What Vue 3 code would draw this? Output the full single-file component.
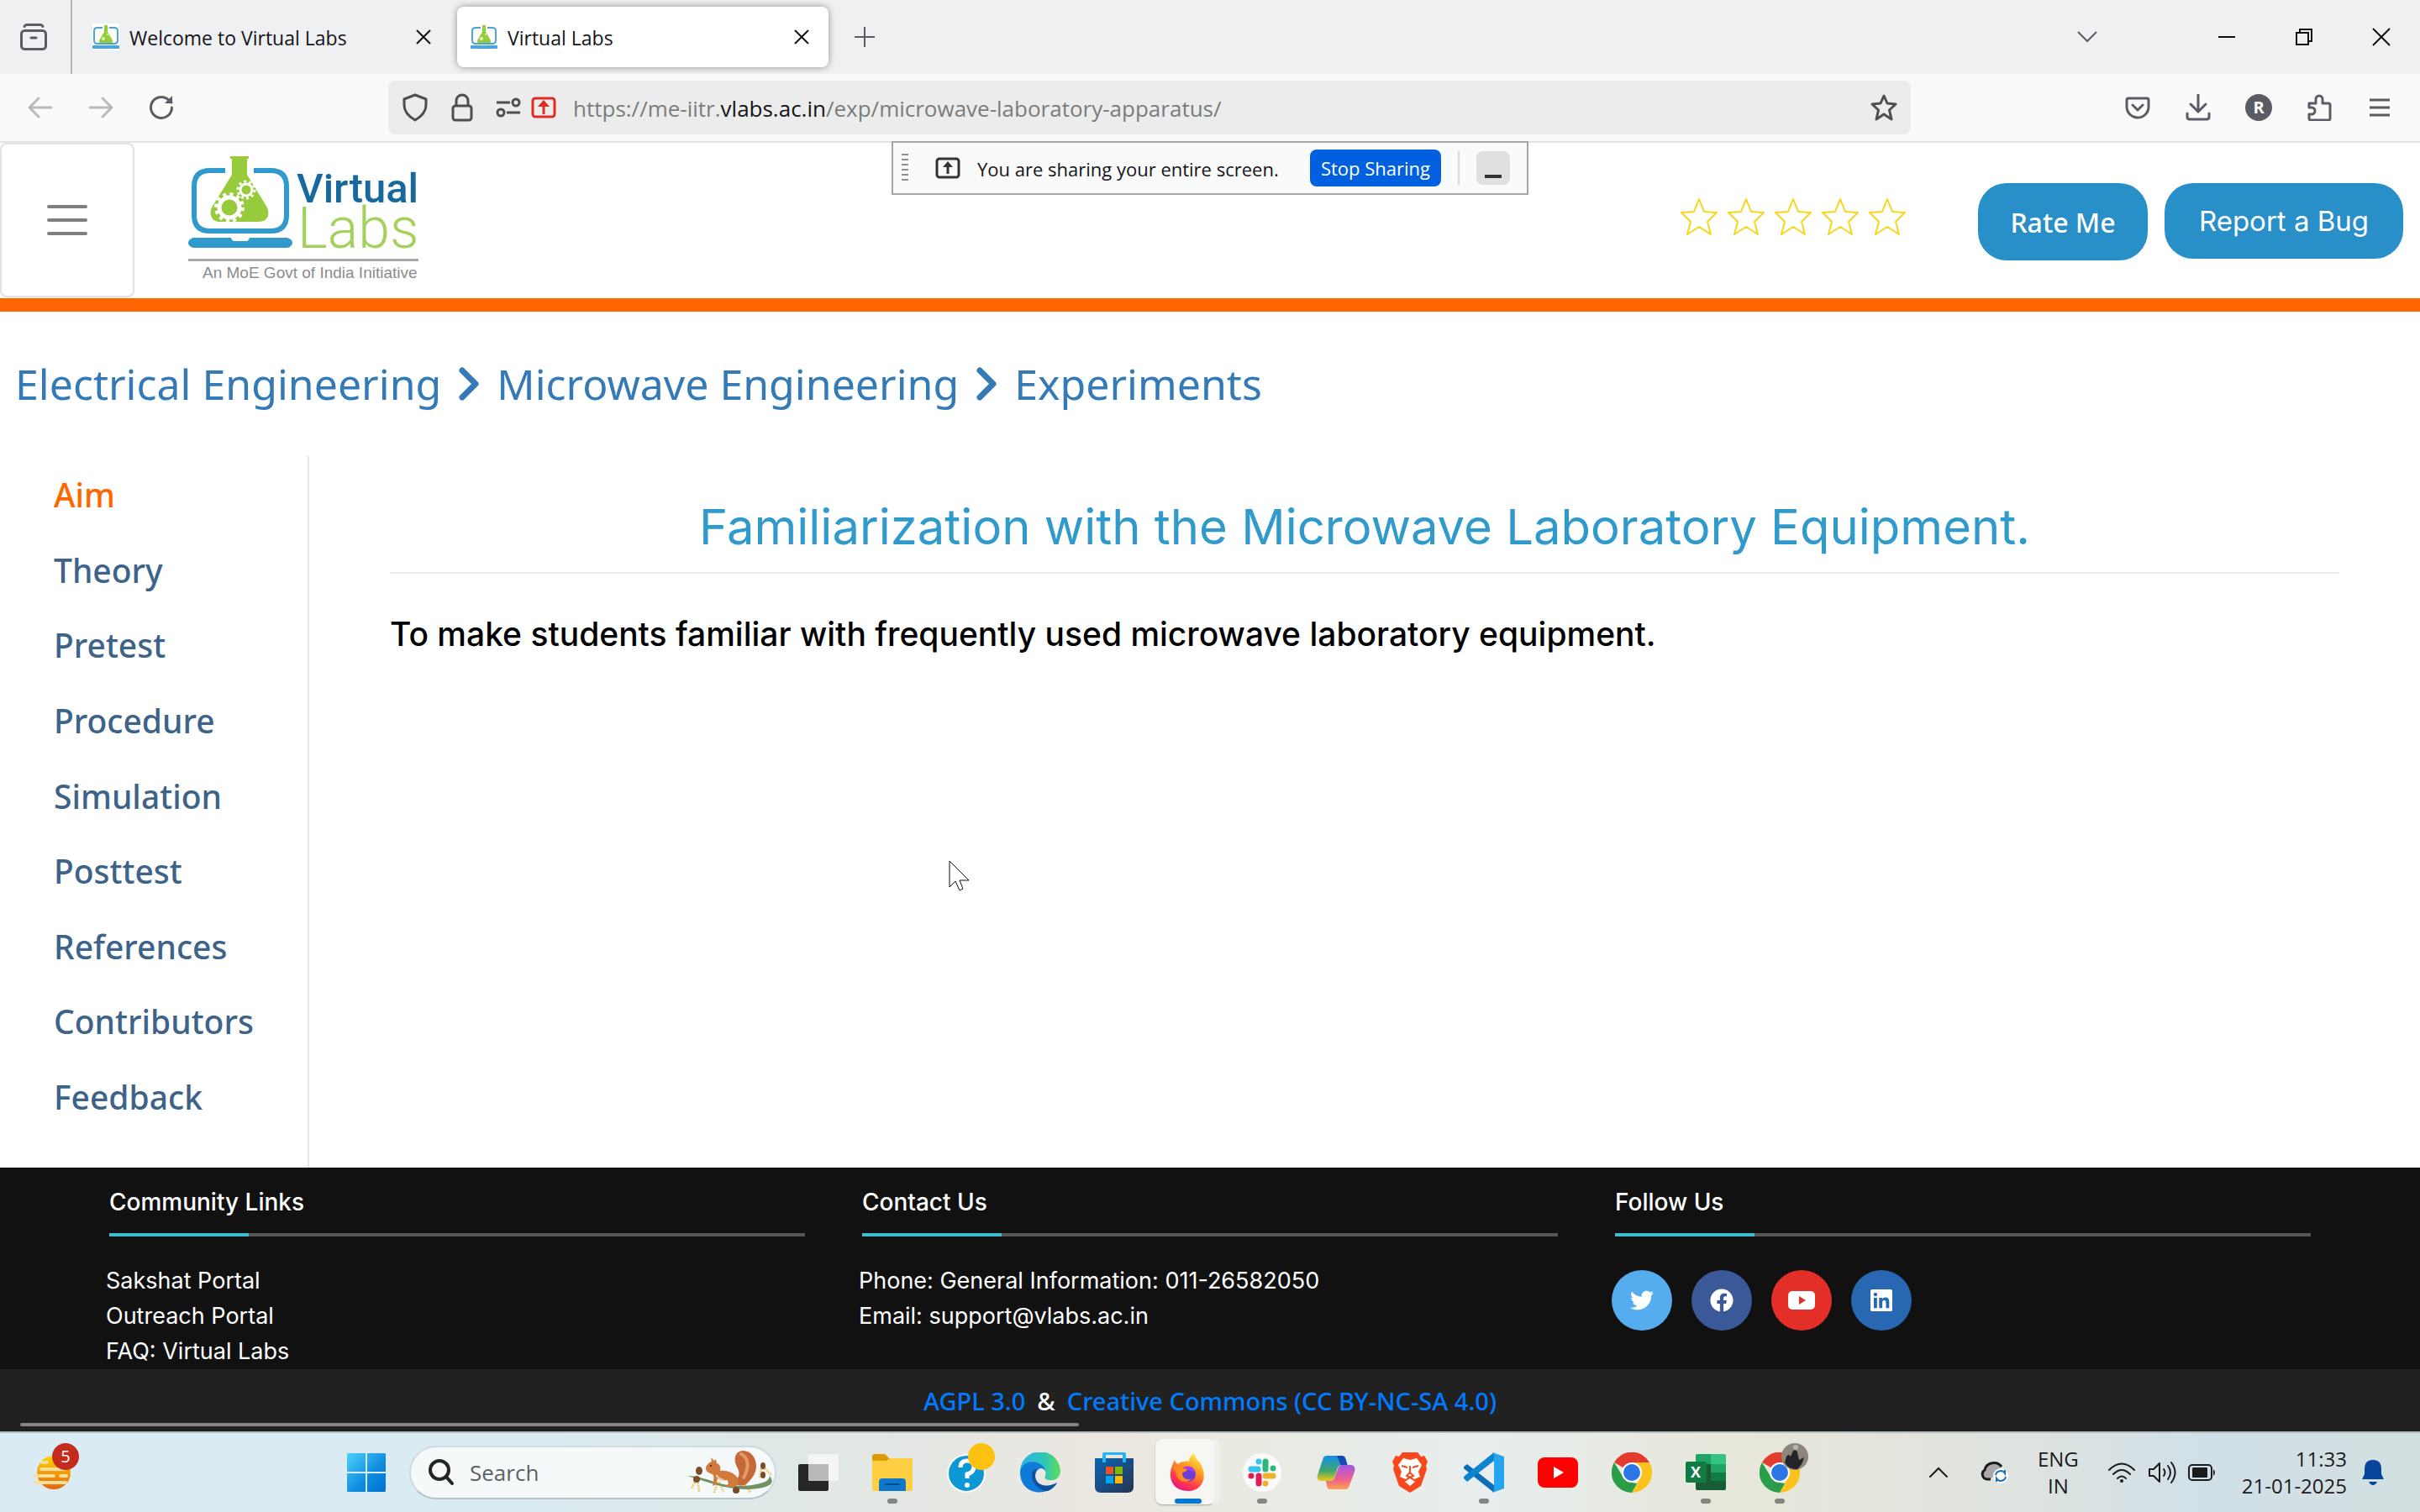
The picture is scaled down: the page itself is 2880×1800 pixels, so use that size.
<script setup>
import { ref } from 'vue'

const tabs = [
  { title: 'Welcome to Virtual Labs', active: false },
  { title: 'Virtual Labs', active: true },
]

const crumbs = ['Electrical Engineering', 'Microwave Engineering', 'Experiments']

const sections = ['Aim', 'Theory', 'Pretest', 'Procedure', 'Simulation', 'Posttest', 'References', 'Contributors', 'Feedback']
const current = ref('Aim')

const community = ['Sakshat Portal', 'Outreach Portal', 'FAQ: Virtual Labs']
const search = ref('')
</script>

<template>
  <div class="screen">
    <!-- tab strip -->
    <div class="tabstrip">
      <button class="view-btn" aria-label="Recent browsing">
        <svg width="32" height="32" viewBox="0 0 32 32" fill="none" stroke="#5b5b66" stroke-width="3" stroke-linecap="round">
          <path d="M5 3.500q1-2 3-2h16q2 0 3 2" /><rect x="1.500" y="8.500" width="29" height="22" rx="4" /><path d="M13 17h6" />
        </svg>
      </button>
      <div v-for="t in tabs" :key="t.title" class="tab" :class="{ active: t.active }">
        <svg class="favicon" width="32" height="32" viewBox="0 0 32 32">
          <rect width="32" height="32" fill="#fff" />
          <path d="M12 5H6Q2 5 2 9v11q0 4 4 4h20q4 0 4-4V9q0-4-4-4h-6" fill="none" stroke="#4ba6d3" stroke-width="2" />
          <path d="M14 2h4v8l6 10q1 3-2 3H10q-3 0-2-3l6-10z" fill="#97cb3b" />
          <circle cx="13" cy="18" r="2" fill="#e6f3cd" /><circle cx="18" cy="13" r="1" fill="#e6f3cd" />
          <rect x="0" y="26" width="32" height="4" rx="1" fill="#4ba6d3" />
        </svg>
        <span class="tab-title">{{ t.title }}</span>
        <button class="tab-close" aria-label="Close tab">
          <svg width="18" height="18" viewBox="0 0 18 18" stroke="#15141a" stroke-width="2"><path d="M1 1l16 16M17 1L1 17" /></svg>
        </button>
      </div>
      <button class="new-tab" aria-label="New tab">
        <svg width="26" height="26" viewBox="0 0 26 26" stroke="#5b5b66" stroke-width="2"><path d="M13 1v24M1 13h24" /></svg>
      </button>
      <div class="window-buttons">
        <button class="list-tabs" aria-label="List all tabs">
          <svg width="26" height="16" viewBox="0 0 26 16" fill="none" stroke="#5b5b66" stroke-width="2"><path d="M2 2l11 11L24 2" /></svg>
        </button>
        <button aria-label="Minimize">
          <svg width="22" height="22" viewBox="0 0 22 22" stroke="#111" stroke-width="2"><path d="M1 11h20" /></svg>
        </button>
        <button aria-label="Restore">
          <svg width="22" height="22" viewBox="0 0 22 22" fill="none" stroke="#111" stroke-width="2"><rect x="2" y="6" width="14" height="14" /><path d="M6 6V2h14v14h-4" /></svg>
        </button>
        <button aria-label="Close">
          <svg width="22" height="22" viewBox="0 0 22 22" stroke="#111" stroke-width="2"><path d="M1 1l20 20M21 1L1 21" /></svg>
        </button>
      </div>
    </div>

    <!-- navigation toolbar -->
    <div class="toolbar">
      <div class="nav-buttons">
        <button aria-label="Back">
          <svg width="30" height="26" viewBox="0 0 30 26" fill="none" stroke="#b9babf" stroke-width="3" stroke-linecap="round" stroke-linejoin="round"><path d="M13 2L2 13l11 11M2 13h26" /></svg>
        </button>
        <button aria-label="Forward">
          <svg width="30" height="26" viewBox="0 0 30 26" fill="none" stroke="#b9babf" stroke-width="3" stroke-linecap="round" stroke-linejoin="round"><path d="M17 2l11 11-11 11M28 13H2" /></svg>
        </button>
        <button aria-label="Reload">
          <svg width="30" height="30" viewBox="0 0 30 30" fill="none" stroke="#5b5b66" stroke-width="3" stroke-linecap="round"><path d="M27.500 15A12.500 12.500 0 1 1 22 4.600L27 9" /><path d="M28 1v9h-9z" fill="#5b5b66" stroke="none" /></svg>
        </button>
      </div>
      <div class="urlbar">
        <svg width="32" height="34" viewBox="0 0 32 34" fill="none" stroke="#4d4d52" stroke-width="3" stroke-linejoin="round"><path d="M16 2l13 5v7c0 8-6 14-13 18C9 28 3 22 3 14V7z" /></svg>
        <svg width="26" height="34" viewBox="0 0 26 34" fill="none" stroke="#4d4d52" stroke-width="3"><rect x="2" y="15" width="22" height="17" rx="3" /><path d="M6 15V9a7 7 0 0 1 14 0v6" /></svg>
        <svg class="perms" width="30" height="24" viewBox="0 0 30 24" fill="none" stroke="#4d4d52" stroke-width="3"><path d="M1 6h16M13 18h16" /><circle cx="24" cy="6" r="4" /><circle cx="6" cy="18" r="4" /></svg>
        <svg class="share-ic" width="30" height="26" viewBox="0 0 30 26" fill="none" stroke="#e22b22" stroke-width="3"><rect x="2" y="2" width="26" height="22" rx="3" /><path d="M15 21V9" /><path d="M8 12l7-8 7 8z" fill="#e22b22" stroke="none" /></svg>
        <div class="url" role="textbox" aria-label="Address" tabindex="0">https://me-iitr.<b>vlabs.ac.in</b>/exp/microwave-laboratory-apparatus/</div>
        <button aria-label="Bookmark this page">
          <svg width="32" height="32" viewBox="0 0 32 32" fill="none" stroke="#4d4d52" stroke-width="3" stroke-linejoin="round"><path d="M16 2l4 9 10 1-7.500 7 2.500 11-9-6-9 6 2.500-11L2 12l10-1z" /></svg>
        </button>
      </div>
      <div class="ext-buttons">
        <button aria-label="Save to Pocket">
          <svg width="32" height="32" viewBox="0 0 32 32" fill="none" stroke="#5b5b66" stroke-width="3" stroke-linecap="round" stroke-linejoin="round"><path d="M5 5h22q2 0 2 2v8a13 13 0 0 1-26 0V7q0-2 2-2z" /><path d="M10 13l6 6 6-6" /></svg>
        </button>
        <button aria-label="Downloads">
          <svg width="32" height="32" viewBox="0 0 32 32" fill="none" stroke="#5b5b66" stroke-width="3" stroke-linecap="round" stroke-linejoin="round"><path d="M16 1v19M7 12l9 9 9-9M3 23v4q0 3 3 3h20q3 0 3-3v-4" /></svg>
        </button>
        <button class="account" aria-label="Account">R</button>
        <button aria-label="Extensions">
          <svg width="32" height="32" viewBox="0 0 32 32" fill="none" stroke="#5b5b66" stroke-width="3" stroke-linejoin="round"><path d="M4 11h8V6a4 4 0 0 1 8 0v5h7q2 0 2 2v16q0 2-2 2H6q-2 0-2-2v-5h3a4 4 0 0 0 0-8H4z" /></svg>
        </button>
        <button aria-label="Menu">
          <svg width="32" height="22" viewBox="0 0 32 22" stroke="#5b5b66" stroke-width="3"><path d="M4 2h24M4 11h24M4 20h24" /></svg>
        </button>
      </div>
    </div>

    <!-- screen sharing notice -->
    <div class="sharing">
      <svg width="8" height="34" viewBox="0 0 8 34" stroke="#8f8f93" stroke-width="2"><path d="M0 1h8M0 7h8M0 13h8M0 19h8M0 25h8M0 31h8" /></svg>
      <svg width="30" height="26" viewBox="0 0 30 26" fill="none" stroke="#333" stroke-width="3"><rect x="2" y="2" width="26" height="22" rx="3" /><path d="M15 20V9" /><path d="M9 12l6-7 6 7z" fill="#333" stroke="none" /></svg>
      <span>You are sharing your entire screen.</span>
      <button class="stop">Stop Sharing</button>
      <i class="divider"></i>
      <button class="mini" aria-label="Minimize notice"></button>
    </div>

    <header class="site-header">
      <button class="hamburger" aria-label="Toggle menu"><i></i><i></i><i></i></button>
      <a href="#" class="logo" aria-label="Virtual Labs home">
        <svg width="276" height="152" viewBox="34 12 276 152">
          <path d="M78 33H60Q41 33 41 52v34q0 19 19 19h72q19 0 19-19V52q0-19-19-19h-20" fill="none" stroke="#2f9acb" stroke-width="6" />
          <path d="M84 16h22v3h-2v19l24 39c4 10-1 17-10 17H72c-9 0-14-7-10-17l24-39V19h-2z" fill="#97cb3b" />
          <g fill="none" stroke="#fff">
            <circle cx="83" cy="77" r="12" stroke-width="5" />
            <circle cx="83" cy="77" r="16" stroke-width="4" stroke-dasharray="4 4.380" />
            <circle cx="103" cy="56" r="7" stroke-width="3" />
            <circle cx="103" cy="56" r="10" stroke-width="3" stroke-dasharray="3 3.280" />
          </g>
          <path d="M40 113h45q1 4 4 4h14q3 0 4-4h45q6 2 6 6t-6 6H40q-6-2-6-6t6-6z" fill="#2f9acb" />
          <path d="M34 139.500h274" stroke="#a9a9a9" stroke-width="3" />
          <text x="163" y="71" font-family="Roboto, sans-serif" font-size="49" font-weight="500" fill="#17699d">Virtual</text>
          <text x="164" y="125" font-family="Roboto, sans-serif" font-size="68" font-weight="300" fill="#a3d15c">Labs</text>
          <text x="51" y="161" font-family="'Liberation Sans', sans-serif" font-size="19" fill="#8c8c8c">An MoE Govt of India Initiative</text>
        </svg>
      </a>
      <div class="actions">
        <div class="stars">
          <button v-for="n in 5" :key="n" :aria-label="'Rate ' + n">
            <svg width="46" height="46" viewBox="0 0 46 46" fill="none" stroke="#f7d51d" stroke-width="2" stroke-linejoin="round"><path d="M23 2l6 15 15 1-11 11 4 15-14-9-14 9 4-15L2 18l15-1z" /></svg>
          </button>
        </div>
        <button class="pill rate">Rate Me</button>
        <button class="pill bug">Report a Bug</button>
      </div>
    </header>

    <nav class="breadcrumb" aria-label="Breadcrumb">
      <template v-for="(c, i) in crumbs" :key="c">
        <svg v-if="i" width="26" height="40" viewBox="0 0 26 40" fill="none" stroke="#337ab7" stroke-width="7" stroke-linecap="round" stroke-linejoin="round"><path d="M5 4l16 16L5 36" /></svg>
        <a href="#">{{ c }}</a>
      </template>
    </nav>

    <div class="body">
      <nav class="side" aria-label="Experiment sections">
        <a v-for="s in sections" :key="s" href="#" :class="{ current: s === current }" @click.prevent="current = s">{{ s }}</a>
      </nav>
      <main class="content">
        <h1>Familiarization with the Microwave Laboratory Equipment.</h1>
        <p>To make students familiar with frequently used microwave laboratory equipment.</p>
      </main>
    </div>

    <footer class="footer">
      <section>
        <h2>Community Links</h2>
        <a v-for="c in community" :key="c" href="#">{{ c }}</a>
      </section>
      <section>
        <h2>Contact Us</h2>
        <a href="#">Phone: General Information: 011-26582050</a>
        <a href="#">Email: support@vlabs.ac.in</a>
      </section>
      <section>
        <h2>Follow Us</h2>
        <div class="social">
          <a href="#" class="tw" aria-label="Twitter"><svg width="28" height="28" viewBox="0 0 512 512" fill="#fff"><path d="M459.370 151.716c.325 4.548.325 9.097.325 13.645 0 138.720-105.583 298.558-298.558 298.558-59.452 0-114.680-17.219-161.137-47.106 8.447.974 16.568 1.299 25.340 1.299 49.055 0 94.213-16.568 130.274-44.832-46.132-.975-84.792-31.188-98.112-72.772 6.498.974 12.995 1.624 19.818 1.624 9.421 0 18.843-1.300 27.614-3.573-48.081-9.747-84.143-51.980-84.143-102.985v-1.299c13.969 7.797 30.214 12.670 47.431 13.319-28.264-18.843-46.781-51.005-46.781-87.391 0-19.492 5.197-37.360 14.294-52.954 51.655 63.675 129.300 105.258 216.365 109.807-1.624-7.797-2.599-15.918-2.599-24.040 0-57.828 46.782-104.934 104.934-104.934 30.213 0 57.502 12.670 76.670 33.137 23.715-4.548 46.456-13.320 66.599-25.340-7.798 24.366-24.366 44.833-46.132 57.827 21.117-2.273 41.584-8.122 60.426-16.243-14.292 20.791-32.161 39.308-52.628 54.253z" /></svg></a>
          <a href="#" class="fb" aria-label="Facebook"><svg width="28" height="28" viewBox="0 0 512 512" fill="#fff"><path d="M504 256C504 119 393 8 256 8S8 119 8 256c0 123.780 90.690 226.380 209.250 245V327.690h-63V256h63v-54.640c0-62.150 37-96.480 93.670-96.480 27.140 0 55.520 4.840 55.520 4.840v61h-31.280c-30.800 0-40.410 19.120-40.410 38.730V256h68.780l-11 71.690h-57.780V501C413.310 482.380 504 379.780 504 256z" /></svg></a>
          <a href="#" class="yt" aria-label="YouTube"><svg width="32" height="22" viewBox="0 0 32 22"><rect width="32" height="22" rx="5" fill="#fff" /><path d="M13 6l8 5-8 5z" fill="#e42f28" /></svg></a>
          <a href="#" class="li" aria-label="LinkedIn"><svg width="26" height="28" viewBox="0 16 448 480" fill="#fff"><path d="M416 32H31.900C14.300 32 0 46.500 0 64.300v383.400C0 465.500 14.300 480 31.900 480H416c17.600 0 32-14.500 32-32.300V64.300c0-17.800-14.400-32.300-32-32.300zM135.400 416H69V202.200h66.500V416zm-33.200-243c-21.300 0-38.500-17.300-38.500-38.500S80.900 96 102.200 96c21.200 0 38.500 17.300 38.500 38.500 0 21.300-17.200 38.500-38.500 38.500zm282.100 243h-66.400V312c0-24.800-.5-56.700-34.500-56.700-34.600 0-39.900 27-39.900 54.900V416h-66.400V202.200h63.700v29.200h.9c8.900-16.800 30.600-34.500 62.900-34.500 67.200 0 79.700 44.300 79.700 101.900V416z" /></svg></a>
        </div>
      </section>
    </footer>
    <div class="license">
      <a href="#">AGPL 3.0</a><span>&amp;</span><a href="#">Creative Commons (CC BY-NC-SA 4.0)</a>
      <i class="scroll-thumb"></i>
    </div>

    <!-- desktop taskbar -->
    <div class="taskbar">
      <div class="widgets">
        <svg width="44" height="42" viewBox="0 0 44 42">
          <defs><linearGradient id="sun" x1="0" y1="0" x2="0" y2="1"><stop offset="0" stop-color="#ffd400" /><stop offset="1" stop-color="#e8660c" /></linearGradient></defs>
          <circle cx="24" cy="21" r="20" fill="url(#sun)" />
          <path d="M10 9h6M9 17h28M2 25h22M32 25h7M2 33h36" stroke="#f6dda0" stroke-width="4" stroke-linecap="round" />
        </svg>
        <span class="count">5</span>
      </div>
      <button class="app" aria-label="Start">
        <svg width="46" height="46" viewBox="0 0 46 46">
          <defs><linearGradient id="win" x1="0" y1="0" x2="1" y2="1"><stop offset="0" stop-color="#4cd2fd" /><stop offset=".6" stop-color="#0f8ade" /><stop offset="1" stop-color="#0072d0" /></linearGradient></defs>
          <path d="M1 0h21v22H0V1zM24 0h21l1 1v21H24zM0 24h22v22H1l-1-1zM24 24h22v21l-1 1H24z" fill="url(#win)" />
        </svg>
      </button>
      <label class="search">
        <svg width="32" height="34" viewBox="0 0 32 34" fill="none" stroke="#252525" stroke-width="4" stroke-linecap="round"><circle cx="14" cy="14" r="11" /><path d="M22 22l7 8" /></svg>
        <input v-model="search" type="text" placeholder="Search" aria-label="Search" />
        <svg width="102" height="54" viewBox="0 0 102 54">
          <g fill="none" stroke="#e8cd7c" stroke-width="3" stroke-dasharray="2 1"><path d="M10 36l-5 10M12 36l2 14M36 38l-4 13M38 38l5 12M68 42l8 9M92 22l8 8M88 22l-2 12" /></g>
          <path d="M0 31q14 0 34 8 30 8 56 0 8-3 8-8 5 6 1 10-6 5-25 6-22 0-42-6-16-5-32-10z" fill="#6f9460" />
          <path d="M54 38c8-4 9-9 6-16C54 12 56 2 66 1c10 0 16 9 16 18 0 10-6 16-12 22-5 3-12 2-16-3z" fill="#c56a37" />
          <path d="M64 5c9 4 10 16 3 28" fill="none" stroke="#e39a66" stroke-width="4" stroke-linecap="round" />
          <path d="M22 22c0-4 4-7 7-8l-1-5 4 4 2-2 1 5c4 1 5 5 4 9 9-1 18 3 21 9 2 5 0 8-3 10H44c5-2 6-5 3-8-4 1-8 0-11-2l-2 7-4 2c1-5 2-9 1-13-4-3-9-3-9-8z" fill="#d2793e" />
          <path d="M34 30q5 6 10 6" fill="none" stroke="#f0c9a2" stroke-width="2" />
          <circle cx="28" cy="19" r="1" fill="#222" />
          <g fill="#7a4d2a"><ellipse cx="14" cy="25" rx="4" ry="5" /><ellipse cx="11" cy="35" rx="4" ry="4" /><ellipse cx="58" cy="48" rx="4" ry="4" /><ellipse cx="90" cy="19" rx="3" ry="4" /><ellipse cx="90" cy="30" rx="3" ry="4" /></g>
        </svg>
      </label>
      <button class="app" aria-label="Task view">
        <svg width="48" height="46" viewBox="0 0 48 46"><rect x="0" y="13" width="36" height="32" rx="2" fill="#262626" /><rect x="12" y="1" width="36" height="32" rx="2" fill="#f5f5f5" /><path d="M12 13h24v20H14q-2 0-2-2z" fill="#b9b9b9" /></svg>
      </button>
      <button class="app running" aria-label="File Explorer">
        <svg width="48" height="44" viewBox="0 0 48 44"><path d="M0 3q0-3 3-3h12l5 5H46q2 0 2 2v10H0z" fill="#dc9c00" /><path d="M0 8h17l4-3h25q2 0 2 2v34q0 3-3 3H3q-3 0-3-3z" fill="#ffce42" /><path d="M8 44V33q0-4 4-4h24q4 0 4 4v11z" fill="#0f78cc" /><path d="M15 36h18" stroke="#074d8c" stroke-width="2" /></svg>
      </button>
      <button class="app" aria-label="Get help">
        <svg width="52" height="48" viewBox="0 0 52 48"><circle cx="26" cy="25" r="22" fill="#0c98d5" stroke="#fff" stroke-width="2" /><path d="M19 18q0-8 8-8t8 7-8 9v5" fill="none" stroke="#fff" stroke-width="5" /><circle cx="27" cy="39" r="3" fill="#fff" /></svg>
        <i class="alert"></i>
      </button>
      <button class="app" aria-label="Edge">
        <svg width="48" height="48" viewBox="0 0 48 48">
          <defs><linearGradient id="e1"><stop offset="0" stop-color="#29b2ee" /><stop offset=".6" stop-color="#2fc6b6" /><stop offset="1" stop-color="#62dc58" /></linearGradient></defs>
          <path d="M0 24A24 24 0 0 1 48 22c0 8-6 12-12 11-5 0-8-2-6-5 2-6-2-10-8-10C12 16 2 20 0 24z" fill="url(#e1)" />
          <path d="M0 24C1 12 14 9 22 13c5 2 8 6 8 9-4-6-12-2-12 6 0 10 12 16 26 8-5 9-16 13-26 11C7 45 0 36 0 24z" fill="#0f7bd6" />
          <path d="M14 26c0 12 9 20 19 20 5-2 9-6 11-10-14 8-26 2-26-8 0-3 1-6 3-8-4 0-7 3-7 6z" fill="#11519b" />
        </svg>
      </button>
      <button class="app" aria-label="Microsoft Store">
        <svg width="46" height="48" viewBox="0 0 46 48">
          <defs><linearGradient id="ms" x1="0" y1="0" x2="1" y2="1"><stop offset="0" stop-color="#0b66b4" /><stop offset="1" stop-color="#26344f" /></linearGradient></defs>
          <path d="M11 10V3q0-2 2-2h20q2 0 2 2v7" fill="none" stroke="#27b4f4" stroke-width="4" /><path d="M0 8q0-1 1-1h44q1 0 1 1v33q0 7-7 7H7q-7 0-7-7z" fill="url(#ms)" />
          <path d="M11 4v8M35 4v8" stroke="#27b4f4" stroke-width="4" />
          <path d="M13 17h9v9h-9z" fill="#f25022" /><path d="M24 17h9v9h-9z" fill="#7fba00" /><path d="M13 28h9v9h-9z" fill="#00a4ef" /><path d="M24 28h9v9h-9z" fill="#ffb900" />
        </svg>
      </button>
      <button class="app focused" aria-label="Firefox">
        <svg width="44" height="46" viewBox="0 0 44 46">
          <defs><linearGradient id="fx" x1=".8" y1="0" x2=".3" y2="1"><stop offset="0" stop-color="#fff14f" /><stop offset=".4" stop-color="#ff9a1e" /><stop offset=".75" stop-color="#ff3a4a" /><stop offset="1" stop-color="#e31587" /></linearGradient></defs>
          <path d="M6 8c1 3 2 4 4 5 2-2 4-3 7-3 2-1 4-1 6 0 0-4 3-8 6-10 1 6 5 8 8 13 8 14 3 32-15 32C4 45-2 30 2 18c1-3 2-7 4-10z" fill="url(#fx)" />
          <circle cx="22" cy="25" r="9" fill="#6a3fd9" /><path d="M16 17c8-4 15 1 15 8-2-3-4-4-6-4" fill="#a83df0" />
          <path d="M4 17c5-3 8-1 10 1 2 0 6 0 7 2-1 2-5 2-6 4 0 6 6 9 12 6-8 8-20 3-19-7" fill="#ff8b21" />
        </svg>
      </button>
      <button class="app running" aria-label="Slack">
        <svg width="48" height="48" viewBox="0 0 48 48"><circle cx="24" cy="24" r="23" fill="#fafafa" /><g stroke-width="7" stroke-linecap="round"><path d="M11 20h8M20 11v0" stroke="#36c5f0" /><path d="M28 11v9M37 19v0" stroke="#2eb67d" /><path d="M28 28h9M28 37v0" stroke="#ecb22e" /><path d="M20 28v9M11 28v0" stroke="#e01e5a" /></g></svg>
      </button>
      <button class="app" aria-label="Copilot">
        <svg width="46" height="42" viewBox="0 0 46 42">
          <defs><linearGradient id="c1" x1="0" y1="0" x2="0" y2="1"><stop offset="0" stop-color="#1591e8" /><stop offset=".6" stop-color="#41a66e" /><stop offset="1" stop-color="#f0c916" /></linearGradient><linearGradient id="c2" x1="0" y1="0" x2="0" y2="1"><stop offset="0" stop-color="#a556e8" /><stop offset=".6" stop-color="#f0608a" /><stop offset="1" stop-color="#fca351" /></linearGradient></defs>
          <path d="M12 1h18q4 0 5 6l1 5h-6q-5 0-6 6l-3 9q-1 4-6 4H6q-7 0-5-7L7 6q1-5 5-5z" fill="url(#c1)" /><path d="M24 1h6q4 0 5 6l2 6h-8z" fill="#1848b8" />
          <path d="M34 41H16q-4 0-4-5l-1-5h5q5 0 6-6l3-8q1-5 6-5h9q7 0 5 8l-6 16q-1 5-5 5z" fill="url(#c2)" />
        </svg>
      </button>
      <button class="app" aria-label="Brave">
        <svg width="42" height="48" viewBox="0 0 42 48"><path d="M12 0h18l4 5 4-1 4 7-2 5 1 4-7 20-13 8-13-8L1 20l1-4-2-5 4-7 4 1z" fill="#f9481c" /><path d="M21 9l8-2 6 8-4 8 2 6-7 3-5-4-5 4-7-3 2-6-4-8 6-8zM21 31l6 4-6 5-6-5z" fill="#fff" /><path d="M11 16l7 2M31 16l-7 2M21 16v8l-4 4 4 2 4-2-4-4" fill="none" stroke="#f9481c" stroke-width="2" /></svg>
      </button>
      <button class="app running" aria-label="Visual Studio Code">
        <svg width="48" height="48" viewBox="0 0 48 48"><path d="M0 17l4-3 32 25v9L1 20q-2-1-1-3z" fill="#0a6fb8" /><path d="M0 31l4 4L36 10V0L1 28q-2 2-1 3z" fill="#0c85d0" /><path d="M34 0l14 5v38l-14 5q2-1 2-4V4q0-3-2-4z" fill="#25a5ef" /></svg>
      </button>
      <button class="app" aria-label="YouTube">
        <svg width="48" height="36" viewBox="0 0 48 36"><rect width="48" height="36" rx="8" fill="#f00" /><path d="M19 11l12 7-12 7z" fill="#fff" /></svg>
      </button>
      <button class="app" aria-label="Chrome">
        <svg width="48" height="48" viewBox="0 0 48 48"><path d="M24 24L3 12A24 24 0 0 1 45 12z" fill="#e33b2e" /><path d="M24 12h21a24 24 0 0 1-21 36l10-18z" fill="#fcc31e" /><path d="M24 48A24 24 0 0 1 3 12l11 18 10 6 6 1z" fill="#2a9d48" /><circle cx="24" cy="24" r="12" fill="#fff" /><circle cx="24" cy="24" r="10" fill="#2b77e8" /></svg>
      </button>
      <button class="app running" aria-label="Excel">
        <svg width="48" height="44" viewBox="0 0 48 44"><path d="M12 2q0-2 2-2h16v12H12z" fill="#21a366" /><path d="M30 0h16q2 0 2 2v10H30z" fill="#33c481" /><path d="M12 12h18v10H12z" fill="#185c37" /><path d="M30 12h18v10H30z" fill="#21a366" /><path d="M12 22h18v10H12z" fill="#185c37" /><path d="M30 22h18v10H30z" fill="#107c41" /><path d="M12 32h36v9q0 2-2 2H14q-2 0-2-2z" fill="#185c37" /><rect y="9" width="25" height="25" rx="2" fill="#107c41" /><text x="12" y="28" text-anchor="middle" font-family="'Open Sans', sans-serif" font-weight="700" font-size="18" fill="#fff">X</text></svg>
      </button>
      <button class="app running" aria-label="Chrome, second profile">
        <svg width="48" height="48" viewBox="0 0 48 48"><path d="M24 24L3 12A24 24 0 0 1 45 12z" fill="#e33b2e" /><path d="M24 12h21a24 24 0 0 1-21 36l10-18z" fill="#fcc31e" /><path d="M24 48A24 24 0 0 1 3 12l11 18 10 6 6 1z" fill="#2a9d48" /><circle cx="24" cy="24" r="12" fill="#fff" /><circle cx="24" cy="24" r="10" fill="#2b77e8" /></svg>
        <svg class="avatar" width="32" height="32" viewBox="0 0 32 32"><circle cx="16" cy="16" r="16" fill="#8c857b" /><path d="M6 16q3-4 5 0l3-7q4-2 5 2l2 9 6-3q-2 9-8 14-10 1-15-8z" fill="#232427" /><circle cx="17" cy="5" r="3" fill="#b9b5ae" /></svg>
      </button>
      <div class="tray">
        <svg width="24" height="14" viewBox="0 0 24 14" fill="none" stroke="#1b1b1b" stroke-width="2" stroke-linecap="round"><path d="M2 12L12 2l10 10" /></svg>
        <svg class="cloud" width="34" height="28" viewBox="0 0 34 28"><path d="M12 22H8a6 6 0 0 1-3-11 11 10 0 0 1 20-4" fill="#a9a9a9" stroke="#1b1b1b" stroke-width="3" /><circle cx="24" cy="18" r="9" fill="#fff" /><path d="M18 17a6 6 0 0 1 11-2v-4M30 19a6 6 0 0 1-11 2v4" fill="none" stroke="#1670b8" stroke-width="2" /></svg>
        <div class="lang"><span>ENG</span><span>IN</span></div>
        <svg width="34" height="26" viewBox="0 0 34 26" fill="none" stroke="#1b1b1b" stroke-width="2" stroke-linecap="round"><path d="M2 10q15-15 30 0M7 15q10-10 20 0M12 20q5-5 10 0" /><circle cx="17" cy="23" r="2" fill="#1b1b1b" stroke="none" /></svg>
        <svg width="34" height="28" viewBox="0 0 34 28" fill="none" stroke="#1b1b1b" stroke-width="2" stroke-linecap="round" stroke-linejoin="round"><path d="M2 10h5l7-7v22l-7-7H2zM19 10q3 4 0 8M24 6q6 8 0 16M28 2q9 12 0 24" /></svg>
        <svg width="34" height="22" viewBox="0 0 34 22"><rect x="1" y="2" width="27" height="18" rx="4" fill="none" stroke="#1b1b1b" stroke-width="2" /><rect x="5" y="5" width="18" height="12" rx="1" fill="#1b1b1b" /><path d="M30 7q4 4 0 8z" fill="#1b1b1b" /></svg>
        <div class="clock"><span>11:33</span><span>21-01-2025</span></div>
        <svg class="bell" width="26" height="32" viewBox="0 0 26 32" fill="#04449b"><path d="M13 1q10 0 10 11v6l3 6H0l3-6v-6Q3 1 13 1zM8 27h10q-2 4-5 4t-5-4z" /></svg>
      </div>
    </div>

    <svg class="pointer" width="28" height="38" viewBox="0 0 28 38" fill="#fff" stroke="#111" stroke-width="1"><path d="M1 1v31l7-7 5 11 4-2-4-10h11z" /></svg>
  </div>
</template>

<style>
body { margin: 0; background: #fff; }
</style>

<style scoped>
* { box-sizing: border-box; }
button { border: 0; padding: 0; background: none; font: inherit; color: inherit; }
a { text-decoration: none; color: inherit; }
svg { display: block; flex: none; }

.screen {
  position: relative;
  display: flex;
  flex-direction: column;
  min-height: 100vh;
  font-family: "Open Sans", sans-serif;
  font-size: 24px;
  color: #15141a;
}

/* tab strip */
.tabstrip { display: flex; align-items: center; height: 88px; background: #eff0f2; }
.view-btn { display: flex; align-items: center; justify-content: center; width: 86px; height: 88px; border-right: 2px solid #b6b6ba; padding-right: 4px; }
.tab { display: flex; align-items: center; gap: 12px; width: 442px; height: 72px; margin-left: 8px; padding: 0 15px 0 16px; border-radius: 8px; }
.tab.active { background: #fff; box-shadow: 0 0 8px rgba(0, 0, 0, 0.4); }
.tab-title { flex: 1; padding-top: 2px; font-size: 23px; }
.tab-close { display: flex; padding: 8px; }
.new-tab { display: flex; margin-left: 30px; }
.window-buttons { display: flex; align-items: center; gap: 70px; margin-left: auto; padding-right: 35px; }
.list-tabs { margin-right: 72px; }

/* toolbar */
.toolbar { display: flex; align-items: center; height: 82px; background: #f9fafa; border-bottom: 2px solid #e0e4e8; }
.nav-buttons { display: flex; align-items: center; gap: 42px; width: 462px; padding-left: 33px; }
.urlbar { display: flex; align-items: center; flex: 1; height: 64px; padding: 0 16px; border-radius: 8px; background: #ebecec; }
.urlbar svg + svg { margin-left: 27px; }
.urlbar svg + .share-ic { margin-left: 12px; }
.url { flex: 1; margin-left: 20px; padding-top: 2px; font-size: 26px; color: #7b7c7d; white-space: nowrap; }
.url b { font-weight: 400; color: #15141a; }
.ext-buttons { display: flex; align-items: center; gap: 40px; width: 606px; justify-content: flex-end; padding-right: 32px; }
.account { width: 32px; height: 32px; border-radius: 50%; background: #5b5b66; color: #fff; font-size: 20px; font-weight: 700; line-height: 32px; }

/* sharing notice */
.sharing {
  position: absolute; top: 168px; left: 0; right: 0; z-index: 2;
  display: flex; align-items: center;
  width: 758px; height: 64px; margin: 0 auto; padding: 0 20px 0 10px;
  border: 2px solid #a3a5a5; background: #f9fafa;
}
.sharing span { flex: 1; margin-left: 20px; padding-top: 2px; font-size: 22px; white-space: nowrap; }
.sharing svg + svg { margin-left: 32px; }
.stop { width: 156px; height: 44px; border-radius: 8px; background: #0060df; color: #fff; font-size: 22px; white-space: nowrap; }
.divider { width: 2px; height: 40px; margin: 0 20px; background: #d5d7d8; }
.mini { display: flex; justify-content: center; width: 40px; height: 40px; padding-top: 28px; border-radius: 8px; background: #dfe1e1; }
.mini::before { content: ""; width: 20px; height: 4px; background: #333; }

/* site header */
.site-header { display: flex; align-items: flex-start; height: 201px; border-bottom: 16px solid #f60; }
.hamburger { display: flex; flex-direction: column; align-items: center; justify-content: center; gap: 12px; width: 160px; height: 184px; border: 2px solid #e0e2e4; border-radius: 8px; }
.hamburger i { width: 48px; height: 4px; border-radius: 2px; background: #7f7f7f; }
.logo { margin: 12px 0 0 64px; }
.actions { display: flex; align-items: flex-start; margin: 48px 20px 0 auto; }
.stars { display: flex; gap: 10px; margin: 17px 85px 0 0; }
.stars button { display: flex; }
.pill { height: 92px; border-radius: 34px; background: #288fc8; color: #fff; font-size: 32px; }
.rate { width: 202px; font-family: "Noto Sans", sans-serif; font-weight: 500; }
.bug { width: 284px; height: 90px; margin-left: 20px; font-family: Inter, sans-serif; font-size: 33px; }

/* breadcrumb */
.breadcrumb { display: flex; align-items: center; gap: 20px; padding: 50px 18px 0; font-family: "Noto Sans", sans-serif; font-size: 50px; line-height: 72px; color: #337ab7; white-space: nowrap; }

/* body */
.body { display: flex; flex: 1; margin-top: 50px; }
.side { display: flex; flex-direction: column; justify-content: space-between; width: 368px; padding: 20px 0 58px 64px; border-right: 2px solid #e5e6e7; font-family: "Noto Sans", sans-serif; font-size: 39px; font-weight: 500; line-height: 52px; color: #3e6389; }
.side .current { color: #f60; }
.content { flex: 1; padding: 46px 96px 0; font-family: Inter, sans-serif; }
h1 { margin: 0 0 38px; padding-bottom: 16px; border-bottom: 2px solid #ebecec; font-size: 58px; font-weight: 400; line-height: 76px; text-align: center; color: #2f9acb; }
p { margin: 0; font-size: 39px; font-weight: 500; line-height: 68px; color: #000; }

/* footer */
.footer { display: flex; gap: 68px; height: 240px; padding: 20px 130px 0; background: #111; color: #fff; font-family: Inter, sans-serif; font-size: 27px; line-height: 42px; }
.footer section { display: flex; flex-direction: column; flex: 1; }
h2 { position: relative; margin: 0 0 32px; padding-bottom: 16px; border-bottom: 4px solid #565656; font-size: 28px; font-weight: 500; line-height: 42px; }
h2::after { content: ""; position: absolute; left: 0; bottom: -4px; width: 20%; height: 4px; background: #3cbdd0; }
.footer section > a { margin-left: -4px; white-space: nowrap; }
.social { display: flex; gap: 23px; margin: 8px 0 0 -4px; }
.social a { display: flex; align-items: center; justify-content: center; width: 72px; height: 72px; border-radius: 50%; }
.tw { background: #55acee; }
.fb { background: #3b5998; }
.yt { background: #e42f28; }
.li { background: #2867b2; }

.license { position: relative; display: flex; align-items: center; justify-content: center; gap: 14px; height: 76px; background: #212121; border-bottom: 2px solid #b3bcbc; font-family: "Noto Sans", sans-serif; font-size: 29px; font-weight: 500; }
.license a { color: #007bff; }
.license span { color: #fff; }
.scroll-thumb { position: absolute; left: 24px; bottom: 6px; width: 1260px; height: 4px; border-radius: 2px; background: #858585; }

/* taskbar */
.taskbar { display: flex; align-items: center; height: 94px; background: linear-gradient(90deg, #dbebf4 0%, #dbebf2 22%, #dfe8e6 32%, #ebe7e1 45%, #e9ebe3 52%, #e8eeee 61%, #e7e7da 72%, #dfe3df 83%, #d1e0e8 91%, #d3e0e0 100%); }
.widgets { position: relative; width: 392px; padding: 0 0 0 40px; }
.count { position: absolute; left: 62px; top: -14px; width: 32px; height: 32px; border-radius: 50%; background: #c42b1c; color: #fff; font-size: 20px; line-height: 32px; text-align: center; }
.app { position: relative; display: flex; align-items: center; justify-content: center; width: 88px; height: 94px; }
.running::after { content: ""; position: absolute; bottom: 10px; left: 38px; width: 12px; height: 6px; border-radius: 3px; background: #858785; }
.focused::before { content: ""; position: absolute; left: 5px; top: 7px; width: 70px; height: 78px; border-radius: 8px; background: #f6f6f2; box-shadow: 8px 0 0 -1px #f0f0ea, 0 1px 2px rgba(0, 0, 0, 0.3); }
.focused::after { content: ""; position: absolute; bottom: 10px; left: 28px; width: 32px; height: 6px; border-radius: 3px; background: #0078d4; }
.focused svg { position: relative; }
.alert { position: absolute; left: 46px; top: 12px; width: 32px; height: 32px; border-radius: 50%; background: #fdc20f; }
.avatar { position: absolute; left: 46px; top: 12px; }
.search { display: flex; align-items: center; width: 437px; height: 64px; margin: 0 6px 0 7px; padding: 0 2px 0 20px; border: 2px solid #cddae0; border-bottom-color: #b6c3c8; border-radius: 32px; background: #f5f9fa; }
.search input { flex: 1; min-width: 0; margin-left: 18px; padding: 0; border: 0; background: none; font: inherit; font-size: 26px; outline: 0; }
.search input::placeholder { color: #5f6163; opacity: 1; }
.tray { display: flex; align-items: center; gap: 14px; margin-left: auto; padding-right: 43px; color: #1b1b1b; line-height: 32px; }
.tray .cloud { margin-left: 24px; }
.lang, .clock { display: flex; flex-direction: column; }
.lang { align-items: center; margin: 0 20px 0 20px; }
.clock { align-items: flex-end; margin-left: 16px; }
.bell { margin-left: 4px; }

.pointer { position: absolute; left: 1129px; top: 1024px; z-index: 2; }
</style>
